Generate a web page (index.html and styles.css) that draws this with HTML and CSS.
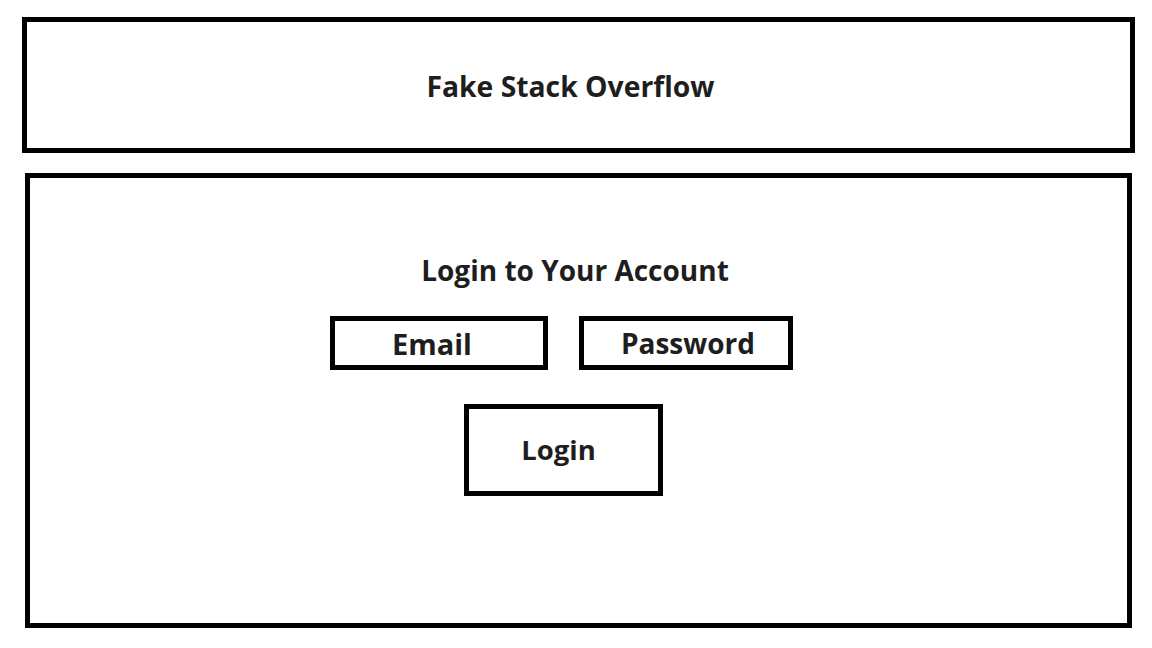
FILE: index.html
```html
<!DOCTYPE html>
<html lang="en">
<head>
<meta charset="utf-8">
<title>Fake Stack Overflow</title>
<link rel="stylesheet" href="styles.css">
</head>
<body>
  <div class="page">
    <header class="site-header">
      <h1 class="site-title">Fake Stack Overflow</h1>
    </header>
    <main class="login-panel">
      <h2 class="login-title">Login to Your Account</h2>
      <div class="field-row">
        <div class="field field-email">Email</div>
        <div class="field field-password">Password</div>
      </div>
      <button class="login-button" type="button">Login</button>
    </main>
  </div>
</body>
</html>
```

FILE: styles.css
```css
* { box-sizing: border-box; }

html, body {
  margin: 0;
  padding: 0;
  background: #ffffff;
}

body {
  font-family: "Open Sans", "Noto Sans", sans-serif;
  color: #1e1e1e;
  width: 1152px;
  height: 648px;
  overflow: hidden;
}

.page {
  display: flex;
  flex-direction: column;
  gap: 20px;
  padding-top: 17px;
}

.site-header {
  margin-left: 22px;
  width: 1113px;
  height: 136px;
  border: 5px solid #000;
  display: flex;
  align-items: center;
  justify-content: center;
  padding: 3px 16px 0 0;
}

.site-title {
  margin: 0;
  font-size: 28.3px;
  font-weight: 700;
  line-height: 1;
}

.login-panel {
  margin-left: 25px;
  width: 1107px;
  height: 455px;
  border: 5px solid #000;
  display: flex;
  flex-direction: column;
  align-items: center;
  padding-top: 78px;
}

.login-title {
  margin: 0 7px 0 0;
  font-size: 28px;
  font-weight: 700;
  line-height: 1;
}

.field-row {
  display: flex;
  gap: 31px;
  margin: 32px 34px 0 0;
}

.field {
  height: 54px;
  border: 5px solid #000;
  display: flex;
  align-items: center;
  justify-content: center;
  font-weight: 700;
  line-height: 1;
}

.field-email {
  width: 218px;
  padding-right: 14px;
  font-size: 29px;
}

.field-password {
  width: 214px;
  padding-left: 4px;
  font-size: 28px;
}

.login-button {
  margin: 34px 30px 0 0;
  width: 199px;
  height: 92px;
  border: 5px solid #000;
  background: #fff;
  font-family: inherit;
  color: inherit;
  font-size: 27.5px;
  font-weight: 700;
  line-height: 1;
  padding: 0 10px 0 0;
  display: flex;
  align-items: center;
  justify-content: center;
}
```
